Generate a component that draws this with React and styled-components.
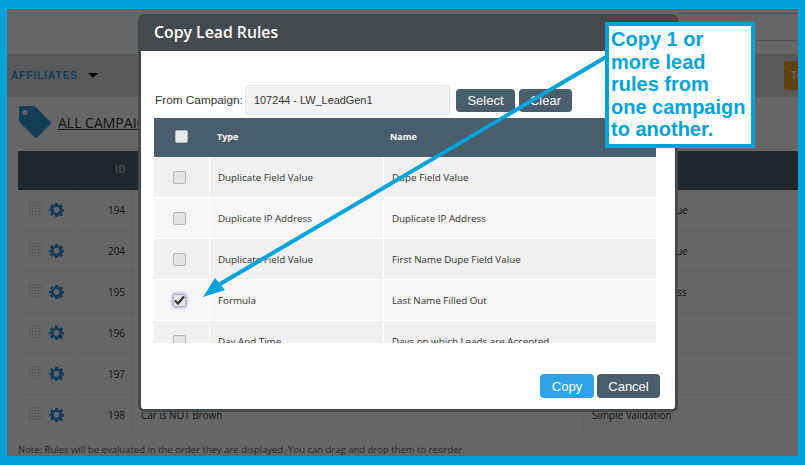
import React from 'react';
import styled, { createGlobalStyle } from 'styled-components';

const GlobalStyle = createGlobalStyle`
  html, body { margin: 0; padding: 0; background: #fff; }
  * { box-sizing: border-box; }
`;

const accent = '#00a3d9';

const Root = styled.div`
  position: relative;
  width: 805px;
  height: 465px;
  overflow: hidden;
  font-family: "Open Sans", sans-serif;
`;

const Page = styled.div`
  width: 805px;
  height: 465px;
  border: solid ${accent};
  border-width: 9px 7px;
  background: #fff;
  overflow: hidden;
`;

const TopBar = styled.div`
  height: 45px;
  padding-top: 4px;
`;

const TopLine = styled.div`
  height: 28px;
  margin-left: 670px;
  border-top: 1px solid #c8c8c8;
  border-bottom: 1px solid #c8c8c8;
`;

const NavBar = styled.div`
  height: 43px;
  background: #dedede;
  display: flex;
  align-items: center;
  justify-content: space-between;
  padding-left: 4px;
`;

const NavLink = styled.a`
  display: flex;
  align-items: center;
  gap: 10px;
  font: bold 10px "Liberation Sans", sans-serif;
  letter-spacing: 1px;
  color: #3498db;
`;

const Caret = styled.span`
  width: 0;
  height: 0;
  border-left: 5px solid transparent;
  border-right: 5px solid transparent;
  border-top: 5px solid #222;
`;

const OrangeButton = styled.div`
  width: 14px;
  height: 29px;
  background: #f0a020;
  border-radius: 3px 0 0 3px;
  color: #fff;
  font: bold 10px "Liberation Sans", sans-serif;
  line-height: 29px;
  padding-left: 7px;
  overflow: hidden;
`;

const PageTitle = styled.div`
  height: 54px;
  display: flex;
  align-items: center;
  gap: 6px;
  padding: 0 0 5px 11px;
`;

const TitleLink = styled.a`
  font-size: 14px;
  color: #333;
  text-decoration: underline;
  padding-top: 2px;
`;

const BackTable = styled.div`
  margin: 0 0 0 11px;
  width: 780px;
`;

const BackHead = styled.div`
  height: 39px;
  background: #506470;
  display: grid;
  grid-template-columns: 97px 1fr;
  align-items: center;
  color: #aaa;
  font: bold 10px "Open Sans", sans-serif;
  padding-bottom: 3px;
  & > span { grid-column: 2 / 3; }
`;

const BackRow = styled.div`
  height: 41px;
  display: grid;
  grid-template-columns: 56px 58px 451px 1fr;
  align-items: center;
  border-bottom: 1px solid #f0f0f0;
  font-size: 9.9px;
  color: #333;
`;

const BackCell = styled.div`
  height: 100%;
  display: flex;
  align-items: center;
  padding-left: ${p => p.$pl ?? 9}px;
  border-left: ${p => p.$first ? 0 : '1px solid #f0f0f0'};
`;

const RowTools = styled(BackCell)`
  gap: 7px;
  padding-left: 11px;
  padding-bottom: 2px;
`;

const Note = styled.div`
  padding: 7px 0 0 11px;
  font-size: 9.5px;
  color: #666;
`;

const Backdrop = styled.div`
  position: absolute;
  left: 7px;
  top: 9px;
  width: 791px;
  height: 447px;
  background: rgba(0, 0, 0, 0.6);
`;

const Modal = styled.div`
  position: absolute;
  left: 138px;
  top: 14px;
  width: 540px;
  height: 398px;
  background: #44494d;
  border-radius: 6px;
  padding: 0 3px 3px;
  display: flex;
  flex-direction: column;
`;

const ModalHeader = styled.div`
  height: 37px;
  flex: none;
  color: #fff;
  font-size: 15.8px;
  font-weight: 600;
  line-height: 36px;
  padding-left: 13px;
`;

const ModalBody = styled.div`
  flex: 1;
  background: #fff;
  border-radius: 0 0 3px 3px;
  padding: 34px 19px 11px 13px;
  display: flex;
  flex-direction: column;
`;

const FromRow = styled.div`
  display: flex;
  align-items: center;
  height: 30px;
  font: 11.8px "Liberation Sans", sans-serif;
  color: #333;
`;

const FromLabel = styled.label`
  margin: 0 3px 0 0;
  padding-left: 1px;
  width: 88px;
  white-space: nowrap;
`;

const CampaignInput = styled.div`
  width: 205px;
  height: 30px;
  margin-right: 6px;
  background: #f3f3f3;
  border: 1px solid #e2e2e2;
  border-radius: 4px;
  padding-left: 8px;
  line-height: 28px;
  font-size: 10.9px;
`;

const ActionButton = styled.button`
  height: ${p => p.$tall ? '24px' : '23px'};
  padding: 0;
  width: ${p => p.$w}px;
  margin-right: ${p => p.$mr || 0}px;
  border: 0;
  border-radius: 4px;
  color: #fff;
  background: ${p => p.$primary ? '#2fa3e8' : '#4a5d6b'};
  font: 13px "Liberation Sans", sans-serif;
`;

const RuleTable = styled.div`
  margin-top: 3px;
  height: 225px;
  overflow: hidden;
`;

const RuleHead = styled.div`
  height: 39px;
  background: #4a5d6b;
  display: grid;
  grid-template-columns: 55px 174px 1fr;
  align-items: center;
  color: #fff;
  font-size: 9px;
  font-weight: 700;
  padding-bottom: 3px;
`;

const RuleRow = styled.div`
  height: 41px;
  border-bottom: 1px solid #fff;
  background: ${p => p.$alt ? '#f6f6f6' : '#f0f0f0'};
  display: grid;
  grid-template-columns: 55px 174px 1fr;
  align-items: center;
  color: #333;
  font-size: 9.8px;
`;

const Cell = styled.div`
  height: 100%;
  display: flex;
  align-items: center;
  padding-left: 8px;
  border-left: 1px solid #fff;
`;

const HeadCell = styled.div`
  padding-left: ${p => p.$pl}px;
`;

const BoxCell = styled.div`
  display: flex;
  justify-content: center;
  padding-right: ${p => p.$head ? 0 : 4}px;
`;

const CheckBox = styled.span`
  width: 13px;
  height: 13px;
  display: flex;
  align-items: center;
  justify-content: center;
  border: 1px solid #b5b5b5;
  border-radius: 2px;
  background: ${p => p.$head ? '#e9e9e9' : '#e4e4e4'};
  box-shadow: ${p => p.$checked ? '0 0 3px 1px #a8a8f0' : 'none'};
`;

const ModalFooter = styled.div`
  margin-top: auto;
  display: flex;
  justify-content: flex-end;
  gap: 3px;
  margin-right: -4px;
`;

const Arrow = styled.svg`
  position: absolute;
  left: 0;
  top: 0;
  pointer-events: none;
`;

const Callout = styled.div`
  position: absolute;
  left: 605px;
  top: 22px;
  width: 150px;
  height: 126px;
  background: #fff;
  border: 4px solid ${accent};
  padding: 2px 0 0 2px;
  color: ${accent};
  font: bold 20px/22.6px "Liberation Sans", sans-serif;
`;

const Gear = () => (
  <svg width="15" height="15" viewBox="0 0 24 24" fill="#3498db">
    <path fillRule="evenodd" d="M10 1h4l.7 3.2 2 .8L19.500 3.300l2.800 2.800L20.600 8.900l.8 2L24 11v4l-2.600.4-.8 2 1.700 2.800-2.800 2.800-2.800-1.700-2 .8L14 24h-4l-.7-2.900-2-.8-2.800 1.700-2.800-2.800 1.700-2.800-.8-2L0 15v-4l2.600-.1.800-2L1.700 6.100l2.800-2.800 2.800 1.700 2-.8zM12 8a4.500 4.500 0 1 0 0 9 4.500 4.500 0 0 0 0-9z" />
  </svg>
);

const DragDots = () => (
  <svg width="13" height="15" viewBox="0 0 13 15" fill="#bdbdbd">
    {[0, 3, 6, 9, 12].map(y => [0, 3, 6, 9, 12].map(x => (
      <rect key={x + '-' + y} x={x} y={y} width="1.200" height="1.200" />
    )))}
  </svg>
);

const Tag = () => (
  <svg width="34" height="34" viewBox="0 0 34 34" fill="#3498db">
    <path fillRule="evenodd" d="M3 1h12c1 0 2 .4 2.700 1.100l14.500 14.600c.8.800.8 2 0 2.800L19.500 32.200c-.8.800-2 .8-2.800 0L2.100 17.700C1.400 17 1 16 1 15V3c0-1.100.9-2 2-2zm4 4a2.500 2.500 0 1 0 0 5 2.500 2.500 0 0 0 0-5z" />
  </svg>
);

const Check = () => (
  <svg width="11" height="10" viewBox="0 0 11 10">
    <path d="M1 5.500 L4 8.500 L10 1.500" fill="none" stroke="#333" strokeWidth="2.200" />
  </svg>
);

const backRows = [
  { id: 194, name: '', rule: 'Duplicate Field Value' },
  { id: 204, name: '', rule: 'Duplicate Field Value' },
  { id: 195, name: '', rule: 'Duplicate IP Address' },
  { id: 196, name: '', rule: '' },
  { id: 197, name: '', rule: '' },
  { id: 198, name: 'Car is NOT Brown', rule: 'Simple Validation' },
];

const rules = [
  { type: 'Duplicate Field Value', name: 'Dupe Field Value' },
  { type: 'Duplicate IP Address', name: 'Duplicate IP Address' },
  { type: 'Duplicate Field Value', name: 'First Name Dupe Field Value' },
  { type: 'Formula', name: 'Last Name Filled Out', checked: true },
  { type: 'Day And Time', name: 'Days on which Leads are Accepted' },
];

export default function App() {
  return (
    <Root>
      <GlobalStyle />
      <Page>
        <TopBar><TopLine /></TopBar>
        <NavBar>
          <NavLink>AFFILIATES <Caret /></NavLink>
          <OrangeButton>To</OrangeButton>
        </NavBar>
        <PageTitle>
          <Tag />
          <TitleLink>ALL CAMPAIGNS</TitleLink>
        </PageTitle>
        <BackTable>
          <BackHead><span>ID</span></BackHead>
          {backRows.map(row => (
            <BackRow key={row.id}>
              <RowTools $first><DragDots /><Gear /></RowTools>
              <BackCell $pl={33}>{row.id}</BackCell>
              <BackCell $pl={8}>{row.name}</BackCell>
              <BackCell $pl={8}>{row.rule}</BackCell>
            </BackRow>
          ))}
        </BackTable>
        <Note>Note: Rules will be evaluated in the order they are displayed. You can drag and drop them to reorder.</Note>
      </Page>
      <Backdrop />
      <Modal>
        <ModalHeader>Copy Lead Rules</ModalHeader>
        <ModalBody>
          <FromRow>
            <FromLabel>From Campaign:</FromLabel>
            <CampaignInput>107244 - LW_LeadGen1</CampaignInput>
            <ActionButton $w={59} $mr={4}>Select</ActionButton>
            <ActionButton $w={53}>Clear</ActionButton>
          </FromRow>
          <RuleTable>
            <RuleHead>
              <BoxCell $head><CheckBox $head /></BoxCell>
              <HeadCell $pl={8}>Type</HeadCell>
              <HeadCell $pl={7}>Name</HeadCell>
            </RuleHead>
            {rules.map((rule, i) => (
              <RuleRow key={rule.name} $alt={i % 2 === 1}>
                <BoxCell>
                  <CheckBox $checked={rule.checked}>{rule.checked && <Check />}</CheckBox>
                </BoxCell>
                <Cell>{rule.type}</Cell>
                <Cell>{rule.name}</Cell>
              </RuleRow>
            ))}
          </RuleTable>
          <ModalFooter>
            <ActionButton $tall $primary $w={54}>Copy</ActionButton>
            <ActionButton $tall $w={63}>Cancel</ActionButton>
          </ModalFooter>
        </ModalBody>
      </Modal>
      <Arrow width="805" height="465" viewBox="0 0 805 465">
        <line x1="606" y1="57" x2="220" y2="284" stroke={accent} strokeWidth="4" />
        <polygon points="203,297 215,278 225,290" fill={accent} />
      </Arrow>
      <Callout>Copy 1 or<br />more lead<br />rules from<br />one campaign<br />to another.</Callout>
    </Root>
  );
}
